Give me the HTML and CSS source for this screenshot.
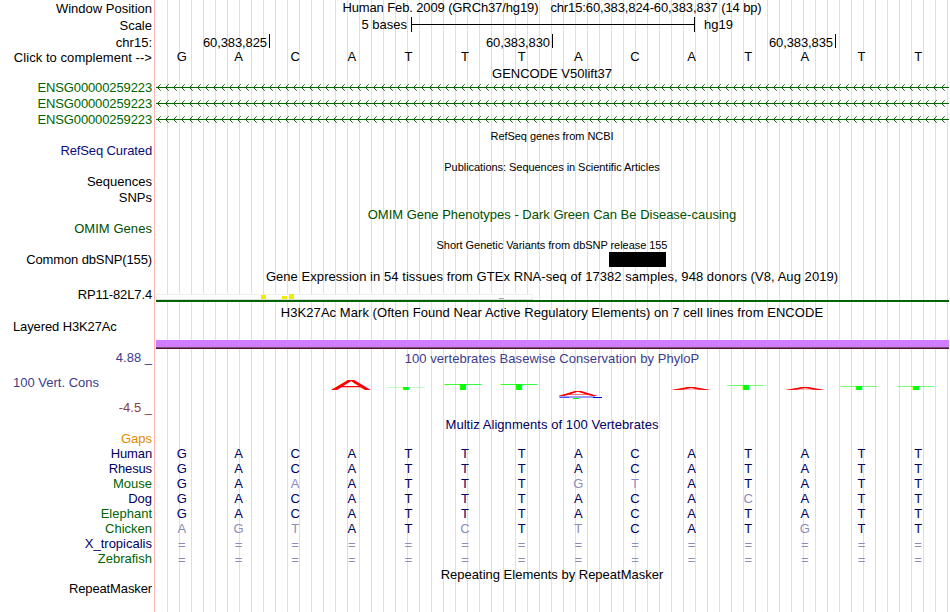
FILE: index.html
```
<!DOCTYPE html>
<html lang="en">
<head>
    <meta charset="UTF-8">
    <meta name="viewport" content="width=device-width, initial-scale=1.0">
    <title>Human chr15:60,383,824-60,383,837 - Genome Browser</title>
    <link rel="stylesheet" href="styles.css">
</head>
<body>
    <main class="browser">
        <!-- Ruler -->
        <div class="row ruler">
            <div class="label">Window Position</div>
            <div class="track title position"><span>Human Feb. 2009 (GRCh37/hg19)</span><span>chr15:60,383,824-60,383,837 (14 bp)</span></div>
        </div>
        <div class="row ruler">
            <div class="label">Scale</div>
            <div class="track scale">
                <span class="scale-size">5 bases</span>
                <span class="scale-bar"></span>
                <span>hg19</span>
            </div>
        </div>
        <div class="row ruler coords">
            <div class="label">chr15:</div>
            <div class="track ticks">
                <span class="tick">60,383,825</span>
                <span class="tick">60,383,830</span>
                <span class="tick">60,383,835</span>
            </div>
        </div>
        <div class="row ruler">
            <div class="label wide">Click to complement --&gt;</div>
            <div class="track bases" data-seq="GACATTTACATATT"></div>
        </div>

        <!-- GENCODE -->
        <div class="row heading"><div class="track title">GENCODE V50lift37</div></div>
        <div class="row gene">
            <div class="label tight">ENSG00000259223</div>
            <svg class="track" width="793" height="16">
                <defs>
                    <pattern id="arrow" width="8" height="16" patternUnits="userSpaceOnUse">
                        <path d="M4.7 4.3 L1.5 7.5 L4.7 10.7" fill="none" stroke="#006400"/>
                    </pattern>
                </defs>
                <rect width="793" height="16" fill="url(#arrow)"/>
                <rect y="7" width="793" height="1" fill="#006400"/>
            </svg>
        </div>
        <div class="row gene">
            <div class="label tight">ENSG00000259223</div>
            <svg class="track" width="793" height="16">
                <rect width="793" height="16" fill="url(#arrow)"/>
                <rect y="7" width="793" height="1" fill="#006400"/>
            </svg>
        </div>
        <div class="row gene">
            <div class="label tight">ENSG00000259223</div>
            <svg class="track" width="793" height="16">
                <rect width="793" height="16" fill="url(#arrow)"/>
                <rect y="7" width="793" height="1" fill="#006400"/>
            </svg>
        </div>

        <div class="row heading small"><div class="track title">RefSeq genes from NCBI</div></div>
        <div class="row"><div class="label navy tight">RefSeq Curated</div></div>

        <div class="row heading small"><div class="track title">Publications: Sequences in Scientific Articles</div></div>
        <div class="row"><div class="label">Sequences</div></div>
        <div class="row snps"><div class="label">SNPs</div></div>

        <div class="row heading omim"><div class="track title">OMIM Gene Phenotypes - Dark Green Can Be Disease-causing</div></div>
        <div class="row omim"><div class="label wide">OMIM Genes</div></div>

        <div class="row heading small"><div class="track title">Short Genetic Variants from dbSNP release 155</div></div>
        <div class="row variants">
            <div class="label tight">Common dbSNP(155)</div>
            <div class="track"><div class="variant"></div></div>
        </div>

        <!-- GTEx expression -->
        <div class="row heading gtex-title"><div class="track title wide">Gene Expression in 54 tissues from GTEx RNA-seq of 17382 samples, 948 donors (V8, Aug 2019)</div></div>
        <div class="row gtex">
            <div class="label tight">RP11-82L7.4</div>
            <svg class="track" width="793" height="18">
                <rect x="0.5" y="7.5" width="376" height="5" fill="#fff" stroke="#f0f0f0"/>
                <rect x="0" y="12" width="377" height="1" fill="#dcdcdc"/>
                <rect x="105" y="8" width="5" height="4" fill="#eeee00"/>
                <rect x="126" y="9" width="5" height="3" fill="#eeee00"/>
                <rect x="133" y="7" width="5" height="5" fill="#eeee00"/>
                <rect x="343" y="11" width="5" height="1" fill="#aaa"/>
                <rect y="13" width="793" height="2" fill="#006400"/>
            </svg>
        </div>

        <div class="row heading"><div class="track title wide">H3K27Ac Mark (Often Found Near Active Regulatory Elements) on 7 cell lines from ENCODE</div></div>
        <div class="row h3k">
            <div class="label left tight">Layered H3K27Ac</div>
            <div class="track"><div class="signal"></div></div>
        </div>

        <!-- PhyloP conservation -->
        <div class="row cons">
            <div class="label cons-axis">
                <span>4.88 _</span>
                <span class="cons-name">100 Vert. Cons</span>
                <span class="cons-min">-4.5 _</span>
            </div>
            <div class="track">
                <div class="title wide">100 vertebrates Basewise Conservation by PhyloP</div>
                <svg class="logo" width="793" height="51">
                    <g class="base-a">
                        <text transform="translate(195 24) scale(6 1.45)">A</text>
                        <text transform="translate(422 30) scale(6 .75)">A</text>
                        <text transform="translate(535 24) scale(6 .44)">A</text>
                        <text transform="translate(649 24) scale(6 .3)">A</text>
                    </g>
                    <g class="base-t">
                        <text transform="translate(250 24) scale(6.6 .27)">T</text>
                        <text transform="translate(307 24) scale(6.6 .95)">T</text>
                        <text transform="translate(363 24) scale(6.6 .95)">T</text>
                        <text transform="translate(590 24) scale(6.6 .7)">T</text>
                        <text transform="translate(703 24) scale(6.6 .56)">T</text>
                        <text transform="translate(760 24) scale(6.6 .56)">T</text>
                    </g>
                    <!-- flattened C and T below the axis -->
                    <rect x="403" y="30" width="36" height="2" fill="#a0a0ff"/>
                    <rect x="404" y="31" width="9" height="1" fill="#5050ff"/>
                    <rect x="437" y="31" width="9" height="1" fill="#0000dc"/>
                    <rect x="417" y="32" width="6" height="1" fill="#00ff00"/>
                </svg>
            </div>
        </div>

        <!-- Multiz alignments -->
        <div class="row heading multiz"><div class="track title wide">Multiz Alignments of 100 Vertebrates</div></div>
        <div class="row species"><div class="label gaps">Gaps</div></div>
        <div class="row species">
            <div class="label tight">Human</div>
            <div class="track bases" data-seq="GACATTTACATATT"></div>
        </div>
        <div class="row species">
            <div class="label tight">Rhesus</div>
            <div class="track bases" data-seq="GACATTTACATATT"></div>
        </div>
        <div class="row species">
            <div class="label green">Mouse</div>
            <div class="track bases" data-seq="GAaATTTgtATATT"></div>
        </div>
        <div class="row species">
            <div class="label">Dog</div>
            <div class="track bases" data-seq="GACATTTACAcATT"></div>
        </div>
        <div class="row species">
            <div class="label green">Elephant</div>
            <div class="track bases" data-seq="GACATTTACATATT"></div>
        </div>
        <div class="row species">
            <div class="label green">Chicken</div>
            <div class="track bases" data-seq="agtATcTtCATgTT"></div>
        </div>
        <div class="row species">
            <div class="label">X_tropicalis</div>
            <div class="track bases" data-seq="=============="></div>
        </div>
        <div class="row species">
            <div class="label green">Zebrafish</div>
            <div class="track bases" data-seq="=============="></div>
        </div>

        <div class="row heading repeats"><div class="track title">Repeating Elements by RepeatMasker</div></div>
        <div class="row"><div class="label tight">RepeatMasker</div></div>
    </main>

    <script>
        // lower case = differs from human, "=" = unalignable bases
        document.querySelectorAll('.bases').forEach(track => {
            for (const base of track.dataset.seq) {
                const cell = document.createElement('span');
                cell.textContent = base.toUpperCase();
                if (base === '=') {
                    cell.className = 'unaligned';
                } else if (base !== base.toUpperCase()) {
                    cell.className = 'mismatch';
                }
                track.appendChild(cell);
            }
        });
    </script>
</body>
</html>
```
FILE: styles.css
```
* {
    margin: 0;
    padding: 0;
    box-sizing: border-box;
}

:root {
    --gene-green: #006400;
    --omim-green: #005000;
    --navy: #0c0c78;
    --align-blue: #000064;
    --cons-blue: #3c3c8c;
    --guide: #dcdcf8;
}

body {
    background: #fff;
    color: #000;
    font: 13px/15px "Liberation Sans", Arial, sans-serif;
    overflow: hidden;
}

/* red line beside the labels, blue guide lines every 12px */
.browser {
    width: 949px;
    height: 612px;
    background:
        linear-gradient(#ffb4b4, #ffb4b4) 154px 0 / 1px 100% no-repeat,
        repeating-linear-gradient(90deg, transparent 0 11px, var(--guide) 11px 12px) 156px 0 / 793px 100% no-repeat;
}

.row {
    display: grid;
    grid-template-columns: 155px 794px;
    height: 16px;
    white-space: nowrap;
}

.label {
    grid-column: 1;
    padding-right: 3px;
    text-align: right;
}

.label.left {
    padding-left: 13px;
    text-align: left;
}

.track {
    grid-column: 2;
}

.title {
    text-align: center;
}

.wide {
    letter-spacing: 0.055px;
}

.tight {
    letter-spacing: -0.12px;
}

.heading {
    height: 14px;
}

.heading.small {
    height: 15px;
    padding-top: 1px;
    font-size: 11px;
    letter-spacing: -0.05px;
}

.navy {
    color: var(--navy);
}

/* Ruler */
.ruler {
    height: 17px;
}

.ruler .label {
    padding-top: 1px;
}

.position {
    display: flex;
    justify-content: center;
    gap: 12px;
    letter-spacing: -0.12px;
}

.scale {
    display: flex;
}

.scale-size {
    width: 256px;
    padding-right: 4px;
    text-align: right;
}

.scale-bar {
    width: 284px;
    height: 15px;
    margin-right: 9px;
    border: solid #000;
    border-width: 0 1px;
    background: linear-gradient(#000, #000) 0 7px / 100% 1px no-repeat;
}

.coords {
    height: 15px;
}

.ticks {
    display: flex;
}

.tick {
    width: 283px;
    height: 14px;
    padding-right: 2px;
    border-right: 1px solid #000;
    line-height: 17px;
    letter-spacing: -0.1px;
    text-align: right;
}

.tick:first-child {
    width: 115px;
}

.bases {
    display: grid;
    grid-template-columns: repeat(14, 1fr);
    width: 793px;
    margin-left: -1.5px;
    text-align: center;
}

/* Genes and variants */
.gene {
    color: var(--gene-green);
}

.gene .track,
.gtex .track {
    display: block;
    margin-left: 1px;
}

.snps {
    height: 17px;
}

.omim {
    color: var(--omim-green);
}

.variants {
    height: 17px;
}

.variant {
    width: 57px;
    height: 15px;
    margin-left: 454px;
    background: #000;
}

.gtex-title,
.gtex {
    height: 18px;
}

/* H3K27Ac */
.h3k {
    height: 31px;
}

.signal {
    height: 9px;
    margin: 21px 0 0 1px;
    background: #d17dff;
    border-bottom: 1px solid #5a0f32;
    box-shadow: inset 0 -1px #6e5078;
}

/* Conservation */
.cons {
    height: 67px;
    color: var(--cons-blue);
}

.cons-axis {
    display: flex;
    flex-direction: column;
    gap: 10px;
}

.cons-name {
    padding-left: 13px;
    text-align: left;
}

.cons-min {
    color: #8c3c3c;
}

.cons .title {
    padding-top: 1px;
}

.logo {
    display: block;
    margin-left: 1px;
    font-size: 10px;
    text-anchor: middle;
}

.base-a {
    fill: #f00;
}

.base-t {
    fill: #0f0;
}

/* Alignments */
.multiz,
.species {
    color: var(--align-blue);
}

.species {
    height: 15px;
}

.gaps {
    color: #e68a00;
}

.green {
    color: var(--gene-green);
}

.mismatch,
.unaligned {
    color: #8c8cb9;
}

.unaligned {
    padding-top: 1px;
}

.repeats {
    height: 15px;
    padding-top: 1px;
}
```
